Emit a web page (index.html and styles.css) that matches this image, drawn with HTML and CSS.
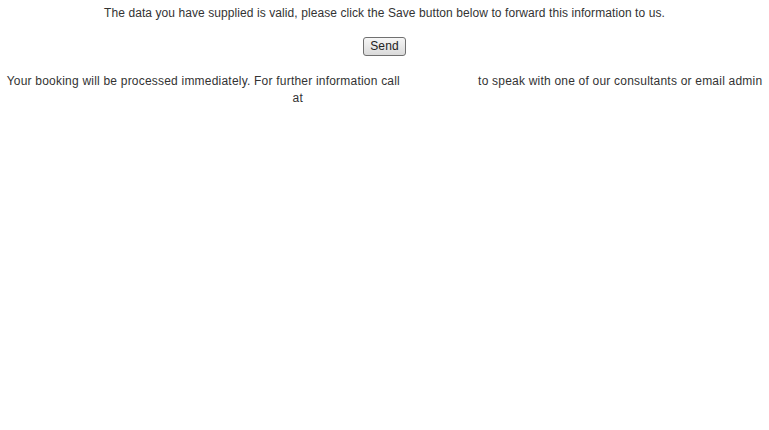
FILE: index.html
```html
<!DOCTYPE html>
<html>
<head>
<meta charset="utf-8">
<link rel="stylesheet" href="styles.css">
</head>
<body>
<div class="page">
  <p class="msg msg-intro">The data you have supplied is valid, please click the Save button below to forward this information to us.</p>
  <div class="actions"><button class="btn" type="button">Send</button></div>
  <p class="msg msg-info"><span>Your booking will be processed immediately. For further information call</span> <span class="phone"></span> <span>to speak with one of our consultants or email admin</span> <span>at</span> <span class="email"></span></p>
</div>
</body>
</html>
```
FILE: styles.css
```css
html, body {
  margin: 0;
  padding: 0;
  background: #fff;
}
.page {
  padding: 5px 4px 0 4px;
  font-family: "Liberation Sans", Arial, sans-serif;
  font-size: 12px;
  line-height: 17px;
  color: #333;
  text-align: center;
}
.msg {
  margin: 0;
}
.msg-intro {
  letter-spacing: 0.08px;
}
.msg-info {
  letter-spacing: 0.21px;
}
.actions {
  margin: 15px 0 17px;
  height: 19px;
}
.btn {
  font-family: "Liberation Sans", Arial, sans-serif;
  font-size: 12px;
  letter-spacing: 0.12px;
  color: #222;
  height: 19px;
  padding: 0 6px;
  border: 1px solid #707070;
  border-radius: 3px;
  background: linear-gradient(#f6f6f6, #dadada);
  line-height: 15px;
}
.phone {
  display: inline-block;
  width: 71px;
}
.email {
  display: inline-block;
  width: 170px;
}
```
